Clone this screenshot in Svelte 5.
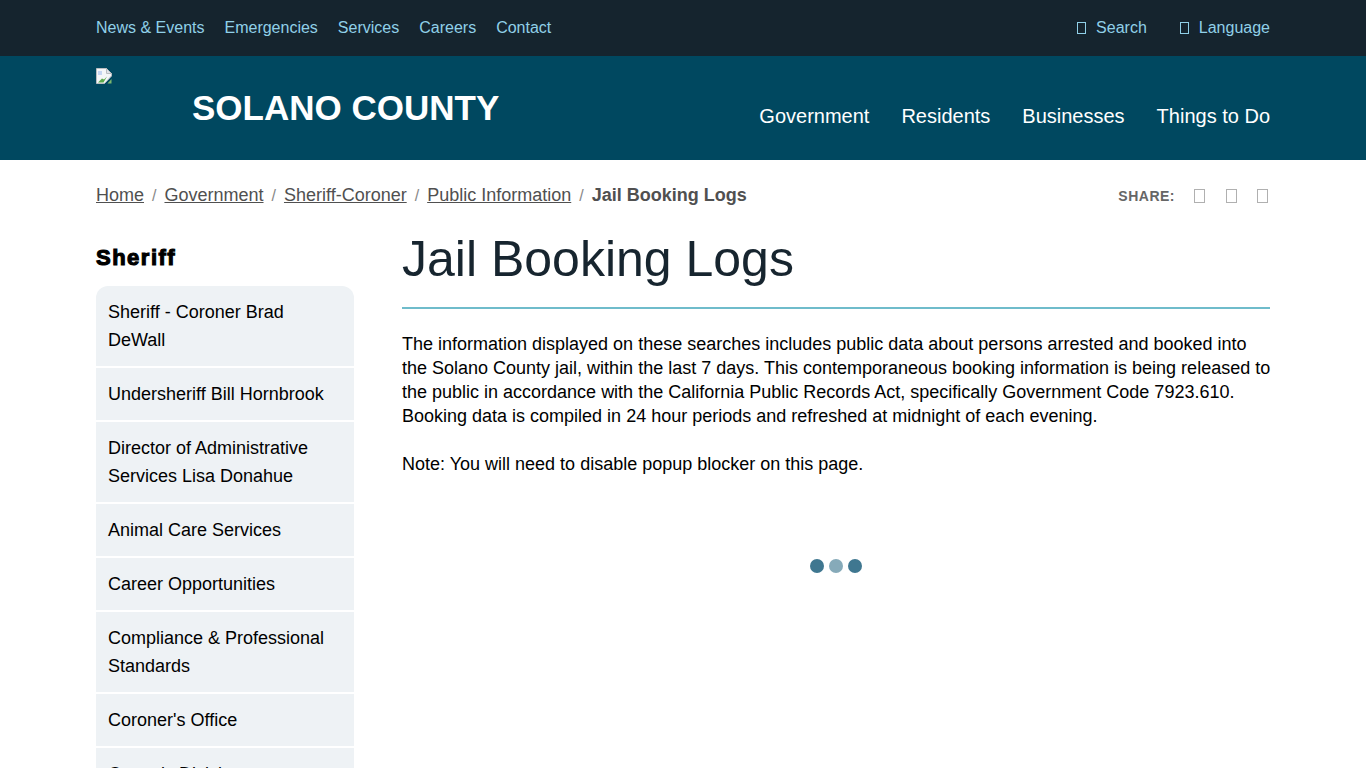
<script>
  const topLinks = ['News & Events', 'Emergencies', 'Services', 'Careers', 'Contact'];
  const mainLinks = ['Government', 'Residents', 'Businesses', 'Things to Do'];
  const crumbs = ['Home', 'Government', 'Sheriff-Coroner', 'Public Information'];
  const side = [
    'Sheriff - Coroner Brad DeWall',
    'Undersheriff Bill Hornbrook',
    'Director of Administrative Services Lisa Donahue',
    'Animal Care Services',
    'Career Opportunities',
    'Compliance & Professional Standards',
    "Coroner's Office",
    'Custody Division'
  ];
</script>

<div class="page">
  <div class="topbar">
    <div class="wrap topbar-in">
      <nav class="toplinks">
        {#each topLinks as l}<a href="#top">{l}</a>{/each}
      </nav>
      <div class="tools">
        <a href="#top"><span class="tofu"></span>Search</a>
        <a href="#top"><span class="tofu"></span>Language</a>
      </div>
    </div>
  </div>

  <header class="masthead">
    <div class="wrap masthead-in">
      <div class="brand">
        <svg class="broken" width="16" height="16" viewBox="0 0 16 16" aria-hidden="true">
          <path d="M0.5 0.5H10.5L15.5 5.5V8L8.5 15.5H0.5Z" fill="#f4f6f8" stroke="#b9bcc0"/>
          <path d="M10.5 0.5V5.5H15.5Z" fill="#dfe3e8" stroke="#b9bcc0"/>
          <path d="M2 3H6V7H2Z" fill="#c5d5f2"/>
          <path d="M2 14.5L6 10.5L8 11.5L11 8.5L7.5 14.5Z" fill="#5ba94c"/>
          <path d="M15.5 11V15.5H11.5Z" fill="#7db86e"/>
        </svg>
        <span class="name">SOLANO COUNTY</span>
      </div>
      <nav class="mainnav">
        {#each mainLinks as l}<a href="#top">{l}</a>{/each}
      </nav>
    </div>
  </header>

  <div class="wrap crumbrow">
    <ol class="crumbs">
      {#each crumbs as c}
        <li><a href="#top">{c}</a><span class="sep">/</span></li>
      {/each}
      <li class="current">Jail Booking Logs</li>
    </ol>
    <div class="share">
      <span class="share-label">SHARE:</span>
      <span class="tofu grey"></span>
      <span class="tofu grey"></span>
      <span class="tofu grey"></span>
    </div>
  </div>

  <div class="wrap columns">
    <aside class="sidebar">
      <h2>Sheriff</h2>
      <ul>
        {#each side as s}<li><a href="#top">{s}</a></li>{/each}
      </ul>
    </aside>
    <main class="content">
      <h1>Jail Booking Logs</h1>
      <p>The information displayed on these searches includes public data about persons arrested and booked into the Solano County jail, within the last 7 days. This contemporaneous booking information is being released to the public in accordance with the California Public Records Act, specifically Government Code 7923.610. Booking data is compiled in 24 hour periods and refreshed at midnight of each evening.</p>
      <p>Note: You will need to disable popup blocker on this page.</p>
      <div class="loader">
        <span class="dot"></span><span class="dot faint"></span><span class="dot"></span>
      </div>
    </main>
  </div>
</div>

<style>
  :global(body) {
    margin: 0;
    background: #fff;
    font-family: "Liberation Sans", Arial, sans-serif;
    color: #000;
  }
  .page {
    height: 768px;
    overflow: hidden;
  }
  a {
    text-decoration: none;
    color: inherit;
  }
  .wrap {
    width: 1174px;
    margin: 0 auto;
    padding-left: 96px;
    padding-right: 96px;
  }
  .topbar {
    background: #15242e;
    height: 56px;
    color: #90d0e8;
    font-size: 16px;
  }
  .topbar-in {
    display: flex;
    justify-content: space-between;
    align-items: center;
    height: 56px;
  }
  .toplinks {
    display: flex;
    gap: 20px;
  }
  .tools {
    display: flex;
    gap: 33px;
  }
  .tools a {
    display: flex;
    align-items: center;
  }
  .tofu {
    display: inline-block;
    box-sizing: border-box;
    width: 9px;
    height: 12px;
    border: 1px solid currentColor;
    margin-right: 10px;
  }
  .tofu.grey {
    color: #b0b0b0;
    width: 11px;
    height: 14px;
    margin: 0 0 0 20.5px;
  }
  .share-label + .tofu.grey {
    margin-left: 0;
  }
  .masthead {
    background: #004860;
    height: 104px;
  }
  .masthead-in {
    display: flex;
    justify-content: space-between;
    height: 104px;
  }
  .brand {
    display: flex;
    align-items: flex-start;
  }
  .broken {
    margin-top: 12px;
    flex: none;
  }
  .name {
    margin-left: 80px;
    margin-top: 31px;
    font-size: 35px;
    line-height: 42px;
    font-weight: 700;
    color: #fff;
  }
  .mainnav {
    display: flex;
    gap: 32px;
    padding-top: 47px;
    font-size: 20px;
    line-height: 26px;
    color: #fff;
  }
  .crumbrow {
    display: flex;
    justify-content: space-between;
    align-items: center;
    height: 72px;
  }
  .crumbs {
    display: flex;
    list-style: none;
    margin: 0;
    padding: 0 0 2px;
    font-size: 18px;
    color: #505050;
  }
  .crumbs a {
    text-decoration: underline;
  }
  .sep {
    margin: 0 8px;
    color: #888;
    font-size: 16px;
  }
  .current {
    font-weight: 700;
  }
  .share {
    display: flex;
    align-items: center;
    padding-right: 2px;
  }
  .share-label {
    font-size: 14px;
    font-weight: 700;
    letter-spacing: 0.5px;
    color: #666;
    margin-right: 19px;
  }
  .columns {
    display: flex;
    gap: 48px;
    align-items: flex-start;
  }
  .sidebar {
    width: 258px;
    flex: none;
  }
  h2 {
    margin: 12px 0 14px;
    font-size: 22px;
    line-height: 28px;
    font-weight: 700;
    color: #000;
    letter-spacing: 1.5px;
    -webkit-text-stroke: 1.1px #000;
  }
  ul {
    list-style: none;
    margin: 0;
    padding: 0;
    border-radius: 12px 12px 0 0;
    overflow: hidden;
  }
  li {
    margin: 0;
  }
  .sidebar li {
    background: #eef2f5;
    margin-bottom: 2px;
    padding: 12px;
    font-size: 18px;
    line-height: 28px;
  }
  .content {
    flex: 1;
    min-width: 0;
  }
  h1 {
    margin: -3px 0 0;
    padding: 0 0 18px;
    font-size: 50px;
    line-height: 60px;
    font-weight: 400;
    color: #17252f;
    border-bottom: 2px solid #6fbccb;
  }
  p {
    margin: 23px -4px 0 0;
    font-size: 18px;
    line-height: 24px;
  }
  p + p {
    margin-top: 24px;
  }
  .loader {
    display: flex;
    justify-content: center;
    gap: 5px;
    margin-top: 83px;
    padding-right: 1px;
  }
  .dot {
    width: 14px;
    height: 14px;
    border-radius: 50%;
    background: #3f7790;
  }
  .dot.faint {
    background: #86aab9;
  }
</style>
